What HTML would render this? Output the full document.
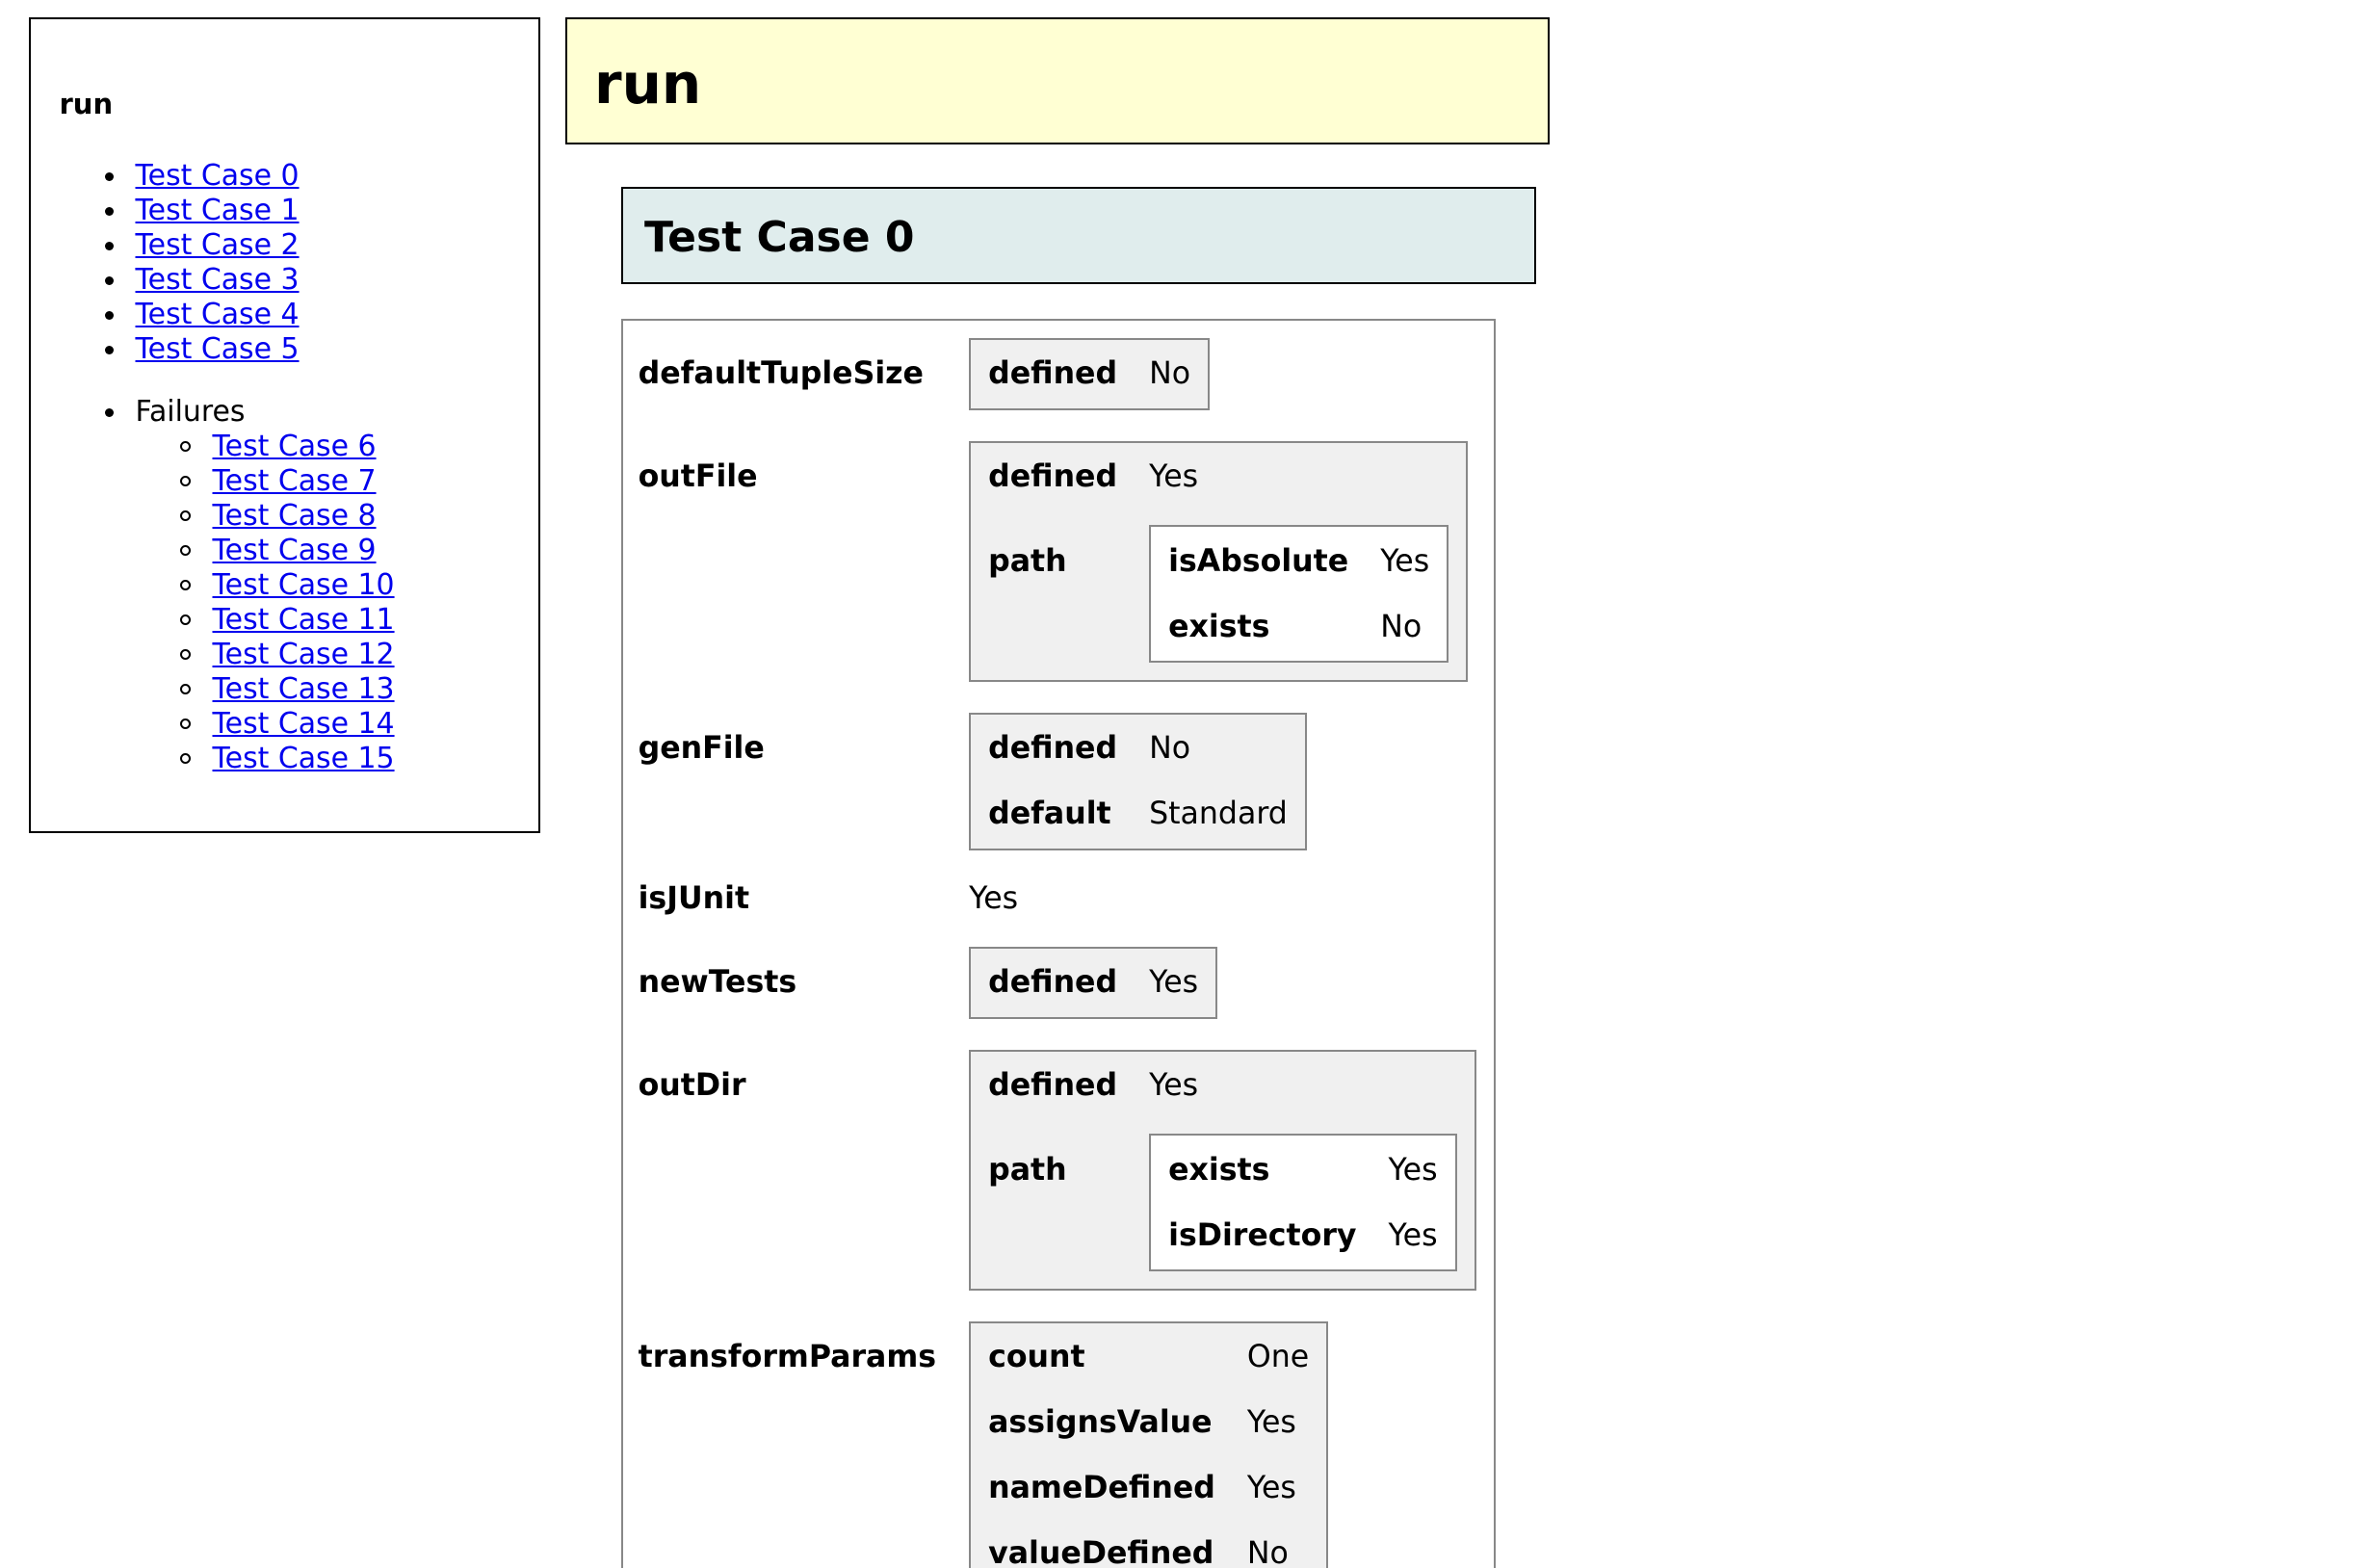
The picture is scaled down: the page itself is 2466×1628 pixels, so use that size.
<!DOCTYPE html>
<html><head><meta charset="utf-8"><style>
html,body{margin:0;padding:0;background:#fff;width:2466px;height:1628px;overflow:hidden;}
body{font-family:"DejaVu Sans","Liberation Sans",sans-serif;font-size:29.9px;line-height:36px;color:#000;position:relative;}
a{color:#0000ee;text-decoration:underline;}
#side{position:absolute;left:29.5px;top:17.5px;width:527px;height:843px;border:2px solid #000;}
#side .t{position:absolute;left:30px;top:70.5px;font-weight:bold;font-size:29px;}
#side ul{margin:0;padding:0 0 0 78px;list-style:none;}
#side li{position:relative;}
#side li::before{content:"";position:absolute;left:-32px;top:14px;width:9px;height:9px;border-radius:50%;background:#000;}
#side ul ul{padding-left:80px;}
#side ul ul li::before{left:-34px;top:12px;width:7px;height:7px;background:none;border:2px solid #000;}
#l1{position:absolute;left:31px;top:145.5px;}
#l2{position:absolute;left:31px;top:390.5px;}
#h1{position:absolute;left:587px;top:17.5px;width:1018px;height:128px;background:#ffffd3;border:2px solid #000;}
#h1 div{position:absolute;left:28px;top:34px;font-size:58px;line-height:67px;font-weight:bold;}
#h2{position:absolute;left:645px;top:194px;width:946px;height:97px;background:#e0eded;border:2px solid #000;}
#h2 div{position:absolute;left:22px;top:26px;font-size:44px;line-height:50px;font-weight:bold;}
table{border:2px solid #888;border-spacing:3.6px;font-size:31.6px;}
td{padding:14.5px 15px;vertical-align:baseline;line-height:36px;white-space:nowrap;}
td.k{font-weight:bold;}
table table{background:#f0f0f0;}
table table table{background:#fff;}
#main{position:absolute;left:645px;top:331px;}
#main>tbody>tr>td:first-child{padding-left:12.6px;padding-right:16px;}
</style></head><body>
<div id="side">
<div class="t">run</div>
<ul id="l1">
<li><a>Test Case 0</a></li>
<li><a>Test Case 1</a></li>
<li><a>Test Case 2</a></li>
<li><a>Test Case 3</a></li>
<li><a>Test Case 4</a></li>
<li><a>Test Case 5</a></li>
</ul>
<ul id="l2"><li>Failures<ul>
<li><a>Test Case 6</a></li>
<li><a>Test Case 7</a></li>
<li><a>Test Case 8</a></li>
<li><a>Test Case 9</a></li>
<li><a>Test Case 10</a></li>
<li><a>Test Case 11</a></li>
<li><a>Test Case 12</a></li>
<li><a>Test Case 13</a></li>
<li><a>Test Case 14</a></li>
<li><a>Test Case 15</a></li>
</ul></li></ul>
</div>
<div id="h1"><div>run</div></div>
<div id="h2"><div>Test Case 0</div></div>
<table id="main"><tbody>
<tr><td class="k">defaultTupleSize</td><td><table><tr><td class="k">defined</td><td>No</td></tr></table></td></tr>
<tr><td class="k">outFile</td><td><table><tr><td class="k">defined</td><td>Yes</td></tr><tr><td class="k">path</td><td><table><tr><td class="k">isAbsolute</td><td>Yes</td></tr><tr><td class="k">exists</td><td>No</td></tr></table></td></tr></table></td></tr>
<tr><td class="k">genFile</td><td><table><tr><td class="k">defined</td><td>No</td></tr><tr><td class="k">default</td><td>Standard</td></tr></table></td></tr>
<tr><td class="k">isJUnit</td><td>Yes</td></tr>
<tr><td class="k">newTests</td><td><table><tr><td class="k">defined</td><td>Yes</td></tr></table></td></tr>
<tr><td class="k">outDir</td><td><table><tr><td class="k">defined</td><td>Yes</td></tr><tr><td class="k">path</td><td><table><tr><td class="k">exists</td><td>Yes</td></tr><tr><td class="k">isDirectory</td><td>Yes</td></tr></table></td></tr></table></td></tr>
<tr><td class="k">transformParams</td><td><table><tr><td class="k">count</td><td>One</td></tr><tr><td class="k">assignsValue</td><td>Yes</td></tr><tr><td class="k">nameDefined</td><td>Yes</td></tr><tr><td class="k">valueDefined</td><td>No</td></tr><tr><td class="k">isStatic</td><td>No</td></tr></table></td></tr>
</tbody></table>
</body></html>
